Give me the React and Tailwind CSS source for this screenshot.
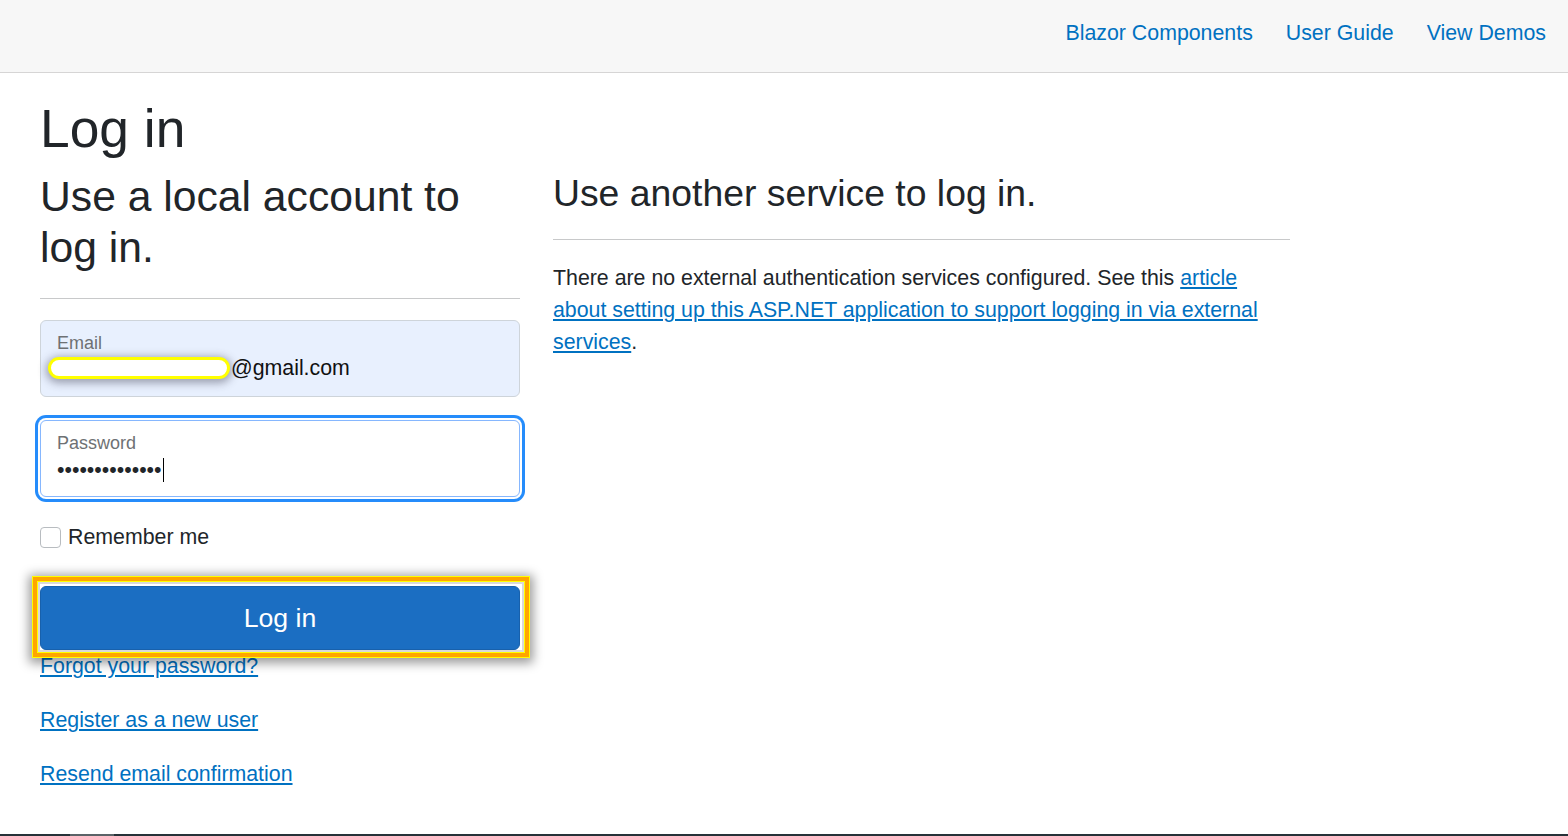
import React from 'react'

const font = { fontFamily: '"Liberation Sans", Arial, sans-serif' }

export default function App() {
    return (
        <div className="flex flex-col h-[836px] bg-white text-[#212529] text-[21.33px] leading-[32px]" style={font}>
            {/* Top row */}
            <header className="h-[73px] shrink-0 flex items-center justify-end gap-[33px] pr-[22px] pb-[6px] bg-[#f7f7f7] border-b border-[#d6d5d5]">
                <a href="#" className="text-[#0071c1] hover:underline">Blazor Components</a>
                <a href="#" className="text-[#0071c1] hover:underline">User Guide</a>
                <a href="#" className="text-[#0071c1] hover:underline">View Demos</a>
            </header>

            <main className="flex-1 pl-[40px] pt-[24px]">
                <h1 className="text-[53.33px] leading-[64px] mb-[10px]">Log in</h1>

                <div className="flex gap-[33px]">
                    {/* Local account */}
                    <section className="w-[480px] shrink-0">
                        <h2 className="text-[42.67px] leading-[51px]">Use a local account to log in.</h2>
                        <hr className="mt-[25px] mb-[21px] border-0 border-t border-[#c8c9ca]" />

                        <div className="h-[77px] rounded-[6px] border border-[#ced4da] bg-[#e8f0fe] px-[16px] pt-[10px]">
                            <div className="text-[18px] leading-[24px] text-[#6e7174]">Email</div>
                            <div className="flex items-center h-[28px] -mt-[1px]">
                                <span className="-ml-[9px] w-[182px] h-[22px] rounded-full border-[3px] border-[#ffff00] bg-white shadow-[0_2px_8px_2px_rgba(60,60,80,0.45)]" />
                                <span className="ml-[1px] text-[#111]">@gmail.com</span>
                            </div>
                        </div>

                        <div className="mt-[23px] h-[77px] rounded-[6px] border border-[#86b7fe] bg-white px-[16px] pt-[10px] shadow-[0_0_0_2px_white,0_0_0_5px_#258cfb]">
                            <div className="text-[18px] leading-[24px] text-[#6e7174]">Password</div>
                            <div className="flex items-center h-[28px] mt-[1px]">
                                <span className="text-[#212529]">••••••••••••••</span>
                                <span className="ml-[1px] w-px h-[24px] bg-black" />
                            </div>
                        </div>

                        <label className="mt-[24px] flex items-center gap-[7px]">
                            <span className="w-[21px] h-[21px] rounded-[4px] border border-[#b8bcc0] bg-white" />
                            <span>Remember me</span>
                        </label>

                        <div className="relative mt-[33px]">
                            <button className="w-full h-[64px] rounded-[6px] bg-[#1b6ec2] border border-[#1861ac] text-white text-[26.67px]">
                                Log in
                            </button>
                            <div className="absolute -left-[8px] -right-[10px] -top-[10px] -bottom-[8px] z-10 border border-[#ffff00] shadow-[0_2px_10px_3px_rgba(0,0,0,0.4)] pointer-events-none">
                                <div className="w-full h-full border-[4px] border-[#ffa500]">
                                    <div className="w-full h-full border border-[#ffff00]">
                                        <div className="w-full h-full border-[2px] border-[#d9d9d9]" />
                                    </div>
                                </div>
                            </div>
                        </div>

                        <div className="flex flex-col items-start">
                            <a href="#" className="text-[#0071c1] underline mb-[22px]">Forgot your password?</a>
                            <a href="#" className="text-[#0071c1] underline mb-[22px]">Register as a new user</a>
                            <a href="#" className="text-[#0071c1] underline">Resend email confirmation</a>
                        </div>
                    </section>

                    {/* External logins */}
                    <section className="w-[737px] shrink-0">
                        <h3 className="text-[37.33px] leading-[45px]">Use another service to log in.</h3>
                        <hr className="mt-[23px] mb-[22px] border-0 border-t border-[#c8c9ca]" />
                        <p>
                            There are no external authentication services configured. See this{' '}
                            <a href="#" className="text-[#0071c1] underline">
                                article about setting up this ASP.NET application to support logging in via external services
                            </a>
                            .
                        </p>
                    </section>
                </div>
            </main>

            <div className="h-[2px] shrink-0 flex bg-[#263238]">
                <div className="ml-[70px] w-[44px] bg-[#5b6367]" />
            </div>
        </div>
    )
}
